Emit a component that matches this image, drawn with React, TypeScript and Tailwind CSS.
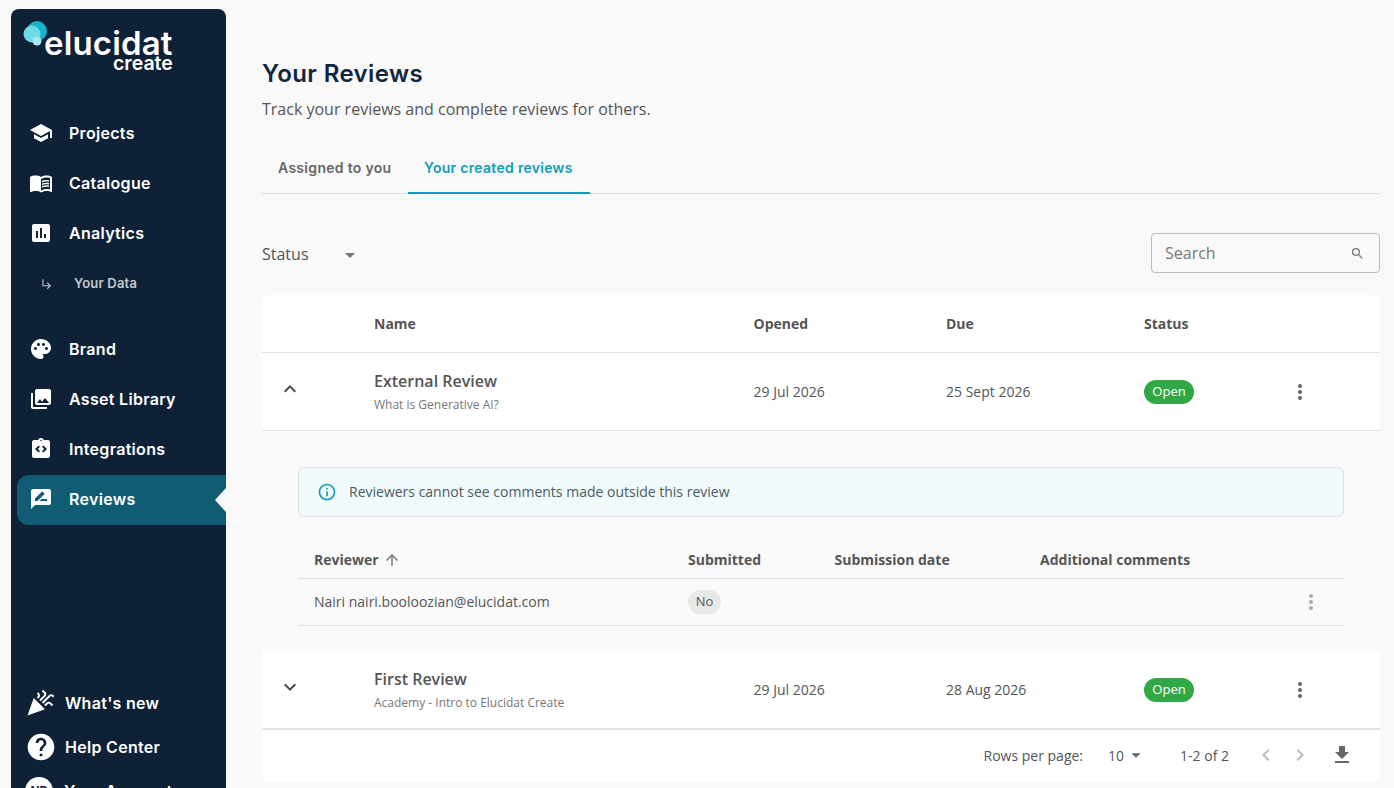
import {
  MdArrowDropDown,
  MdArrowUpward,
  MdAssessment,
  MdCelebration,
  MdChevronLeft,
  MdChevronRight,
  MdExpandLess,
  MdExpandMore,
  MdFileDownload,
  MdHelp,
  MdInfoOutline,
  MdIntegrationInstructions,
  MdMenuBook,
  MdMoreVert,
  MdOutlineSubdirectoryArrowRight,
  MdPalette,
  MdPhotoLibrary,
  MdRateReview,
  MdSchool,
  MdSearch,
} from "react-icons/md";
import type { IconType } from "react-icons";

const body = "font-['Open_Sans',sans-serif]";
const side = "font-['Inter',sans-serif]";

function NavItem({ icon: Icon, label, active }: { icon: IconType; label: string; active?: boolean }) {
  return (
    <div
      className={`relative flex h-[50px] items-center rounded-l-xl pl-[12px] ${active ? "mt-px bg-[#105c72] pb-[2px]" : ""}`}
    >
      <Icon className="size-[24px] text-white" />
      <span className="ml-[16px] text-[16px] font-semibold tracking-[0.3px] text-white">{label}</span>
      {active && (
        <span className="absolute right-0 top-[13px] h-0 w-0 border-y-[12px] border-r-[11px] border-y-transparent border-r-[#f9f9f9]" />
      )}
    </div>
  );
}

function Sidebar() {
  return (
    <aside className={`${side} ml-[11px] mt-[9px] flex h-[830px] w-[215px] shrink-0 flex-col rounded-t-lg bg-[#0f2137] pl-[6px]`}>
      <div className="relative h-[74px]">
        <svg className="absolute left-[6px] top-[12px]" width="26" height="26" viewBox="0 0 26 26">
          <circle cx="14" cy="10" r="10" fill="#12b5cb" />
          <circle cx="9" cy="13" r="8.5" fill="#70d9e6" />
          <circle cx="14" cy="20" r="4.5" fill="#a6e6ee" />
        </svg>
        <div className="absolute left-[27px] top-[21px] text-[33px] font-semibold leading-[26px] tracking-[0.15px] text-white">
          elucidat
        </div>
        <div className="absolute left-[96px] top-[47px] text-[19.5px] font-semibold leading-[14px] text-white">create</div>
      </div>
      <div className="mt-[25px] flex flex-col">
        <NavItem icon={MdSchool} label="Projects" />
        <NavItem icon={MdMenuBook} label="Catalogue" />
        <NavItem icon={MdAssessment} label="Analytics" />
        <div className="flex h-[50px] items-center pl-[23px] pt-[1px]">
          <MdOutlineSubdirectoryArrowRight className="size-[14px] text-[#b8bec6]" />
          <span className="ml-[20px] text-[13px] font-semibold tracking-[0.2px] text-[#c4c8ce]">Your Data</span>
        </div>
      </div>
      <div className="mt-[16px] flex flex-col">
        <NavItem icon={MdPalette} label="Brand" />
        <NavItem icon={MdPhotoLibrary} label="Asset Library" />
        <NavItem icon={MdIntegrationInstructions} label="Integrations" />
        <NavItem icon={MdRateReview} label="Reviews" active />
      </div>
      <div className="mt-[164px] flex flex-col gap-[16px] pl-[8px]">
        <div className="flex h-[28px] items-center">
          <MdCelebration className="size-[30px] shrink-0 text-white" />
          <span className="ml-[10px] text-[16px] font-semibold tracking-[0.3px] text-white">What's new</span>
        </div>
        <div className="flex h-[28px] items-center">
          <MdHelp className="size-[32px] shrink-0 text-white" />
          <span className="ml-[8px] text-[16px] font-semibold tracking-[0.3px] text-white">Help Center</span>
        </div>
        <div className="flex h-[28px] items-center">
          <span className="flex size-[28px] items-center justify-center rounded-full bg-white text-[12px] font-bold text-[#0f2137]">
            NB
          </span>
          <span className="ml-[11px] text-[16px] font-semibold tracking-[0.3px] text-white">Your Account</span>
        </div>
      </div>
    </aside>
  );
}

const rowGrid = "grid grid-cols-[112px_379.5px_192.5px_198px_1fr] items-center";

function ReviewRow({ title, sub, opened, due, open }: { title: string; sub: string; opened: string; due: string; open?: boolean }) {
  const Chevron = open ? MdExpandLess : MdExpandMore;
  return (
    <div className={`${rowGrid} h-[78px] border-b border-[#e2e2e2]`}>
      <div className="pl-[16px]">
        <Chevron className="-mt-[6px] size-[24px] text-[#4a4a4a]" />
      </div>
      <div>
        <div className="-mt-[1px] text-[16px] font-semibold leading-[22px] text-[#555]">{title}</div>
        <div className="mt-[5px] text-[12px] leading-[16px] text-[#777]">{sub}</div>
      </div>
      <div className="text-[14px] text-[#555]">{opened}</div>
      <div className="text-[14px] text-[#555]">{due}</div>
      <div className="flex items-center">
        <span className="flex h-[24px] w-[50px] items-center justify-center rounded-full bg-[#31a846] text-[13px] text-white">
          Open
        </span>
        <MdMoreVert className="ml-[94px] size-[24px] text-[#666]" />
      </div>
    </div>
  );
}

export default function App() {
  return (
    <div className={`${body} flex h-screen overflow-hidden bg-[#f9f9f9]`}>
      <Sidebar />
      <main className="ml-[36px] mr-[14px] min-w-0 flex-1 pt-[57px]">
        <h1 className={`${side} text-[24px] font-semibold leading-[34px] tracking-[0.4px] text-[#12263f]`}>Your Reviews</h1>
        <p className="mt-[7px] text-[16px] leading-[22px] text-[#555]">Track your reviews and complete reviews for others.</p>
        <div className={`${side} mt-[22px] flex h-[52px] border-b border-[#dcdcdc] text-[14px] font-semibold tracking-[0.3px]`}>
          <div className="flex w-[146px] items-center pl-[16px] text-[#666]">Assigned to you</div>
          <div className="-mb-px flex w-[182px] items-center border-b-2 border-[#129cbc] pl-[16px] text-[#129cbc]">
            Your created reviews
          </div>
        </div>
        <div className="mt-[39px] flex h-[40px] items-center justify-between">
          <div className="flex items-center pt-[3px]">
            <span className="-mt-[2px] text-[16px] text-[#555]">Status</span>
            <MdArrowDropDown className="ml-[29px] size-[24px] text-[#777]" />
          </div>
          <div className="flex h-[40px] w-[229px] items-center justify-between rounded border border-[#bbb] pl-[13px] pr-[14px]">
            <span className="text-[16px] text-[#777]">Search</span>
            <MdSearch className="size-[15px] text-[#777]" />
          </div>
        </div>
        <div className="mt-[22px] rounded-lg bg-white">
          <div className={`${rowGrid} h-[58px] border-b border-[#e2e2e2] text-[14px] font-bold text-[#555]`}>
            <div />
            <div>Name</div>
            <div>Opened</div>
            <div>Due</div>
            <div>Status</div>
          </div>
          <ReviewRow title="External Review" sub="What is Generative AI?" opened="29 Jul 2026" due="25 Sept 2026" open />
          <div className="h-[220px] bg-[#fafafa] px-[36px] pt-[36px]">
            <div className="flex h-[50px] items-center rounded-md border border-[#d5e5ea] bg-[#f1f9fb] pl-[18px]">
              <MdInfoOutline className="size-[20px] text-[#129cbc]" />
              <span className="ml-[12px] pb-[2px] text-[14px] text-[#4b5b60]">Reviewers cannot see comments made outside this review</span>
            </div>
            <div className="mt-[24px] grid h-[38px] grid-cols-[374px_146.5px_205.5px_1fr] items-center border-b border-[#dedede] pl-[16px] text-[14px] font-bold text-[#555]">
              <div className="flex items-center">
                Reviewer
                <MdArrowUpward className="ml-[4px] size-[18px] text-[#777]" />
              </div>
              <div>Submitted</div>
              <div>Submission date</div>
              <div>Additional comments</div>
            </div>
            <div className="grid h-[47px] grid-cols-[374px_1fr_auto] items-center border-b border-[#dedede] pl-[16px] text-[14px] text-[#555]">
              <div className="pb-[2px]">Nairi nairi.booloozian@elucidat.com</div>
              <div>
                <span className="inline-flex h-[24px] w-[33px] items-center justify-center rounded-full bg-[#e8e8e8] text-[13px]">No</span>
              </div>
              <MdMoreVert className="mr-[21px] size-[24px] text-[#aaa]" />
            </div>
          </div>
          <ReviewRow title="First Review" sub="Academy - Intro to Elucidat Create" opened="29 Jul 2026" due="28 Aug 2026" />
          <div className="flex h-[53px] items-center justify-end rounded-b-lg border-t border-[#e2e2e2] pb-[2px] pr-[26px] text-[14px] text-[#555]">
            <span>Rows per page:</span>
            <span className="ml-[25px]">10</span>
            <MdArrowDropDown className="ml-[1px] size-[22px] text-[#666]" />
            <span className="ml-[33px]">1-2 of 2</span>
            <MdChevronLeft className="ml-[25px] size-[24px] text-[#bbb]" />
            <MdChevronRight className="ml-[10px] size-[24px] text-[#bbb]" />
            <MdFileDownload className="ml-[18px] size-[24px] text-[#666]" />
          </div>
        </div>
      </main>
    </div>
  );
}
